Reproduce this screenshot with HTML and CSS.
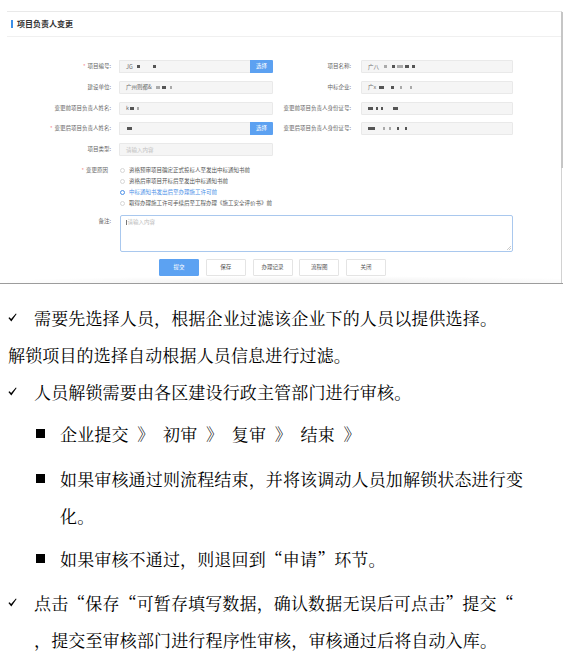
FILE: index.html
```html
<!DOCTYPE html>
<html lang="zh-CN">
<head>
<meta charset="utf-8">
<title>项目负责人变更</title>
<link rel="stylesheet" href="styles.css">
</head>
<body>
<div class="shot">
  <div class="frame">
    <div class="head"><span class="bar"></span><span class="title">项目负责人变更</span></div>
    <div class="form">
      <div class="grid">
        <div class="lbl"><span class="req">*</span>项目编号:</div>
        <div class="pair">
          <div class="inp"><span>JG</span><span class="m" style="width:3px;margin-left:4px"></span><span class="m" style="width:3px;margin-left:13px"></span></div>
          <div class="btn-sel">选择</div>
        </div>
        <div class="lbl r">项目名称:</div>
        <div class="inp"><span>广八</span><span class="m lt" style="width:3px;margin-left:5px"></span><span class="m" style="width:3px;margin-left:5px"></span><span class="m lt" style="width:6px;margin-left:2px"></span><span class="m" style="width:4px;margin-left:2px"></span><span class="m" style="width:3px;margin-left:3px"></span></div>

        <div class="lbl">建设单位:</div>
        <div class="inp"><span>广州则都&amp;</span><span class="m lt" style="width:4px;margin-left:4px"></span><span class="m" style="width:4px;margin-left:2px"></span><span class="m lt" style="width:2px;margin-left:4px"></span></div>
        <div class="lbl r">中标企业:</div>
        <div class="inp"><span>广x</span><span class="m" style="width:5px;margin-left:3px"></span><span class="m" style="width:3px;margin-left:7px"></span><span class="m lt" style="width:2px;margin-left:6px"></span><span class="m lt" style="width:2px;margin-left:8px"></span></div>

        <div class="lbl">变更前项目负责人姓名:</div>
        <div class="inp"><span>k</span><span class="m" style="width:4px;margin-left:1px"></span><span class="m lt" style="width:2px;margin-left:3px"></span></div>
        <div class="lbl r">变更前项目负责人身份证号:</div>
        <div class="inp"><span class="m" style="width:5px"></span><span class="m" style="width:2px;margin-left:3px"></span><span class="m" style="width:2px;margin-left:3px"></span><span class="m" style="width:5px;margin-left:10px"></span></div>

        <div class="lbl"><span class="req">*</span>变更后项目负责人姓名:</div>
        <div class="pair">
          <div class="inp"><span class="m" style="width:5px;margin-left:1px"></span></div>
          <div class="btn-sel">选择</div>
        </div>
        <div class="lbl r">变更后项目负责人身份证号:</div>
        <div class="inp"><span class="m" style="width:7px"></span><span class="m lt" style="width:2px;margin-left:8px"></span><span class="m lt" style="width:2px;margin-left:4px"></span><span class="m" style="width:2px;margin-left:6px"></span><span class="m" style="width:2px;margin-left:6px"></span></div>

        <div class="lbl">项目类型:</div>
        <div class="inp ph">请输入内容</div>
      </div>

      <div class="reason">
        <div class="lbl rl"><span class="req">*</span>变更原因</div>
        <div class="opts">
          <div class="opt"><span class="radio"></span>资格预审项目确定正式投标人至发出中标通知书前</div>
          <div class="opt"><span class="radio"></span>资格后审项目开标后至发出中标通知书前</div>
          <div class="opt on"><span class="radio"></span>中标通知书发出后至办理施工许可前</div>
          <div class="opt"><span class="radio"></span>取得办理施工许可手续后至工程办理《施工安全评价书》前</div>
        </div>
      </div>

      <div class="memo">
        <div class="lbl">备注:</div>
        <div class="area"><span class="caret"></span>请输入内容<svg class="grip" width="4" height="4" viewBox="0 0 4 4"><path d="M0 4L4 0M2 4L4 2" stroke="#aaa" stroke-width="0.6"/></svg></div>
      </div>

      <div class="actions">
        <div class="btn primary">提交</div>
        <div class="btn">保存</div>
        <div class="btn">办理记录</div>
        <div class="btn">流程图</div>
        <div class="btn">关闭</div>
      </div>
      <div class="shade"></div>
    </div>
  </div>
</div>

<div class="doc">
  <div class="item chk-item l1">
    <span class="mark"><svg class="ck" width="9" height="9" viewBox="0 0 9 9"><path d="M0.4 5.0 L1.6 4.2 L3.1 5.9 L7.9 0.5 L8.6 1.1 L3.3 8.4 Z" fill="#000"/></svg></span>
    <span class="txt">需要先选择人员，根据企业过滤该企业下的人员以提供选择。</span>
  </div>
  <div class="plain">解锁项目的选择自动根据人员信息进行过滤。</div>
  <div class="item chk-item l3">
    <span class="mark"><svg class="ck" width="9" height="9" viewBox="0 0 9 9"><path d="M0.4 5.0 L1.6 4.2 L3.1 5.9 L7.9 0.5 L8.6 1.1 L3.3 8.4 Z" fill="#000"/></svg></span>
    <span class="txt">人员解锁需要由各区建设行政主管部门进行审核。</span>
  </div>
  <div class="item sq-item l4">
    <span class="mark"><span class="sq"></span></span>
    <span class="txt">企业提交&ensp;》&ensp;初审&ensp;》&ensp;复审&ensp;》&ensp;结束&ensp;》</span>
  </div>
  <div class="item sq-item l5">
    <span class="mark"><span class="sq"></span></span>
    <span class="txt">如果审核通过则流程结束，并将该调动人员加解锁状态进行变<br>化。</span>
  </div>
  <div class="item sq-item l7">
    <span class="mark"><span class="sq"></span></span>
    <span class="txt">如果审核不通过，则退回到<span class="q">“</span>申请<span class="q">”</span>环节。</span>
  </div>
  <div class="item chk-item l8">
    <span class="mark"><svg class="ck" width="9" height="9" viewBox="0 0 9 9"><path d="M0.4 5.0 L1.6 4.2 L3.1 5.9 L7.9 0.5 L8.6 1.1 L3.3 8.4 Z" fill="#000"/></svg></span>
    <span class="txt">点击<span class="q">“</span>保存<span class="q">“</span>可暂存填写数据，确认数据无误后可点击<span class="q">”</span>提交<span class="q">“</span><br>，提交至审核部门进行程序性审核，审核通过后将自动入库。</span>
  </div>
</div>
</body>
</html>
```

FILE: styles.css
```css
* { box-sizing: border-box; }
html, body { margin: 0; padding: 0; background: #fff; }
body {
  width: 566px;
  height: 659px;
  overflow: hidden;
  font-family: "Noto Sans CJK SC", "Noto Sans", sans-serif;
}

/* ---------- embedded form screenshot ---------- */
.shot {
  width: 563px;
  height: 284px;
  padding-top: 11px;
  border-bottom: 1px solid #9c9c9c;
}
.frame {
  position: relative;
  margin-left: 7px;
  width: 555px;
  height: 272px;
  border-top: 1px solid #e9e9e9;
  border-right: 1px solid #d2d2d2;
}
.frame::after {
  content: "";
  position: absolute;
  right: -2px;
  top: 0;
  width: 2px;
  height: 156px;
  background: #c6c6c6;
}
.head {
  display: flex;
  align-items: center;
  height: 25px;
  padding-left: 4px;
  border-bottom: 1px solid #f0f0f0;
}
.bar {
  width: 2px;
  height: 8px;
  background: #3b8fe9;
  margin-right: 4px;
}
.title {
  font-size: 8px;
  font-weight: bold;
  color: #333;
  line-height: 1;
}
.form { padding-top: 23px; }
.grid {
  display: grid;
  grid-template-columns: 112px 154px 88px 152px;
  grid-auto-rows: 13px;
  row-gap: 7.75px;
}
.lbl {
  font-size: 5.5px;
  line-height: 13px;
  color: #666;
  text-align: right;
  padding-right: 8px;
  white-space: nowrap;
}
.lbl.r { padding-right: 10px; }
.req { color: #f26d6d; margin-right: 2px; }
.pair { display: flex; }
.pair .inp { flex: 1; border-right: none; border-radius: 1px 0 0 1px; }
.inp {
  display: flex;
  align-items: center;
  height: 13px;
  padding-left: 6px;
  background: #f5f5f5;
  border: 1px solid #e9e9e9;
  border-radius: 1px;
  font-size: 5.5px;
  color: #666;
  white-space: nowrap;
}
.inp.ph { color: #c2c2c2; }
.m {
  display: inline-block;
  height: 3px;
  background: #555;
}
.m.lt { background: #aaa; }
.btn-sel {
  width: 23px;
  height: 13px;
  background: #5ca1f1;
  color: #fff;
  font-size: 5.5px;
  line-height: 13px;
  text-align: center;
  border-radius: 0 1px 1px 0;
}

.reason {
  display: grid;
  grid-template-columns: 112px 1fr;
  margin-top: 8.5px;
}
.reason .lbl { line-height: 11px; padding-right: 11px; }
.opt {
  display: flex;
  align-items: center;
  height: 11px;
  font-size: 5.5px;
  color: #555;
  white-space: nowrap;
}
.radio {
  width: 5px;
  height: 5px;
  margin-left: 1px;
  margin-right: 4px;
  border: 0.6px solid #d6d6d6;
  border-radius: 50%;
  background: #fff;
}
.opt.on { color: #4a90e8; }
.opt.on .radio {
  border: 1.4px solid #4a90e8;
  background: #fff;
}

.memo {
  display: grid;
  grid-template-columns: 112px 394px;
  margin-top: 6.5px;
}
.area {
  position: relative;
  height: 37px;
  margin-left: 1px;
  border: 1px solid #a9c8ee;
  border-radius: 2px;
  padding: 3px 5px;
  font-size: 5.5px;
  line-height: 6px;
  color: #bdbdbd;
}
.caret {
  display: inline-block;
  width: 0.6px;
  height: 5px;
  background: #777;
  margin-right: 1px;
  vertical-align: middle;
}
.grip { position: absolute; right: 1px; bottom: 1px; }

.actions {
  display: flex;
  gap: 6.75px;
  margin-top: 7px;
  padding-left: 152px;
}
.btn {
  width: 40px;
  height: 17px;
  border: 1px solid #e4e4e4;
  border-radius: 1px;
  font-size: 5.5px;
  line-height: 15px;
  text-align: center;
  color: #555;
  background: #fff;
}
.btn.primary {
  background: #5ca2f2;
  border-color: #5ca2f2;
  color: #fff;
}
.shade {
  height: 7px;
  background: radial-gradient(ellipse 60% 100% at 55% 100%, rgba(0,0,0,0.07), rgba(0,0,0,0) 100%);
}

/* ---------- document text ---------- */
.doc {
  padding-top: 14.5px;
  font-family: "Noto Serif CJK SC", "Noto Sans CJK SC", serif;
  font-size: 17px;
  line-height: 37px;
  letter-spacing: 0.15px;
  color: #000;
}
.item {
  display: flex;
  white-space: nowrap;
}
.mark {
  flex: none;
  height: 37px;
  display: flex;
  align-items: center;
}
.chk-item .mark { width: 34px; padding-left: 8px; }
.sq-item .mark { width: 60px; padding-left: 36px; }
.sq {
  width: 9px;
  height: 9px;
  background: #000;
}
.plain { padding-left: 8px; white-space: nowrap; }
.q {
  display: inline-block;
  width: 17px;
  text-align: center;
}
.l4 { margin-top: 5px; }
.l5 { margin-top: 8px; }
.l7 { margin-top: 6px; }
.l8 { margin-top: 7px; }
```
